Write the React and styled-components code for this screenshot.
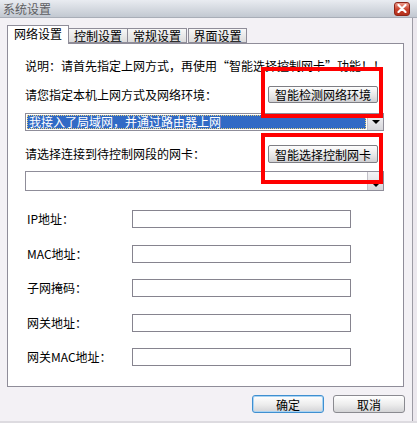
import React from 'react';
import styled, { createGlobalStyle } from 'styled-components';

const Global = createGlobalStyle`
  html, body { margin: 0; padding: 0; }
  body {
    width: 417px; height: 423px; overflow: hidden; background: #f3f1f5;
    font-family: "Noto Sans CJK SC", "Liberation Sans", sans-serif;
    font-size: 12px; color: #000;
  }
  * { box-sizing: border-box; }
`;

const Window = styled.div`
  width: 417px; height: 423px; display: flex; flex-direction: column;
  background: #f3f1f5; border-bottom: 2px solid #dddbe0;
`;

const TitleBar = styled.div`
  height: 18px; flex: none; display: flex; align-items: center; justify-content: space-between;
  padding: 0 7px 0 3px;
  background: linear-gradient(#e9ecf1, #c2c8d1);
  border-bottom: 1px solid #a8adb7;
`;

const Title = styled.span`
  color: #5e5e62; font-size: 12px; line-height: 14px;
`;

const CloseBtn = styled.div`
  width: 16px; height: 14px; border-radius: 3px; border: 1px solid #8d2417;
  background: linear-gradient(#ec9a8a, #c9402b 55%, #b3301c);
  display: flex; align-items: center; justify-content: center;
`;

const Body = styled.div`
  flex: 1; display: flex; min-height: 0;
`;

const Main = styled.div`
  width: 412px; flex: none; display: flex; flex-direction: column;
  padding: 7px 7px 0 7px;
`;

const Strip = styled.div`
  flex: 1; border-left: 1px solid #9d9ba4; background: #ece8ee;
`;

const TabRow = styled.div`
  height: 18px; display: flex; align-items: flex-end; position: relative; z-index: 1;
`;

const Tab = styled.div`
  width: ${p => p.$w}px; height: ${p => (p.$active ? 19 : 15)}px;
  margin-left: ${p => p.$ml || 0}px;
  margin-bottom: ${p => (p.$active ? -1 : 0)}px;
  display: flex; align-items: center; justify-content: center;
  border: 1px solid #8f8d99; border-bottom: ${p => (p.$active ? 'none' : '1px solid #8f8d99')};
  border-left: ${p => (p.$first || p.$active ? '1px solid #8f8d99' : 'none')};
  background: ${p => (p.$active ? '#ffffff' : 'linear-gradient(#f7f7f7, #dcdcdc)')};
  padding-bottom: ${p => (p.$active ? 3 : 0)}px;
  font-size: 12px; line-height: 13px;
`;

const Panel = styled.div`
  height: 344px; margin-right: 1px; background: #fff;
  border: 1px solid #8f8d99; position: relative;
  padding: 14px 19px 0 17px; display: flex; flex-direction: column;
`;

const Note = styled.div`
  height: 16px; line-height: 16px; white-space: nowrap;
`;

const Quote = styled.span`
  font-feature-settings: "fwid";
`;

const ActionRow = styled.div`
  margin-top: ${p => p.$mt}px; height: ${p => p.$h}px;
  display: flex; align-items: center; justify-content: space-between;
`;

const Label = styled.span`
  line-height: 16px; white-space: nowrap;
`;

const PushButton = styled.div`
  width: 110px; height: 100%; margin-right: 6px;
  border: 1px solid #7e7e84; border-radius: 2px;
  background: linear-gradient(#fdfdfd, #e6e6e6 60%, #cfcfd2);
  display: flex; align-items: center; justify-content: center;
  font-size: 12px; line-height: 13px;
`;

const Combo = styled.div`
  margin-top: ${p => p.$mt}px; height: ${p => p.$h}px;
  border: 1px solid #8f8d99; display: flex;
`;

const ComboValue = styled.div`
  flex: 1; padding: 1px; display: flex;
`;

const Selected = styled.div`
  flex: 1; background: #316ac5; color: #fff; outline: 1px dotted #e6cf7a; outline-offset: -1px;
  padding-left: 2px; line-height: 14px; font-size: 12px; white-space: nowrap;
`;

const DropBtn = styled.div`
  width: 16px; flex: none; border-left: 1px solid #c2c0c8;
  background: linear-gradient(#f4f4f6, #d6d6da);
  display: flex; align-items: ${p => (p.$bottom ? 'flex-end' : 'center')}; justify-content: center;
  padding-bottom: ${p => (p.$bottom ? 3 : 0)}px;
`;

const Arrow = styled.div`
  width: 0; height: 0; border-left: 4px solid transparent; border-right: 4px solid transparent;
  border-top: 4px solid #000;
`;

const Fields = styled.div`
  margin-top: 19px; display: grid; grid-template-columns: 105px 219px;
  grid-auto-rows: 18px; row-gap: 16.5px; padding-left: 2px;
`;

const FieldLabel = styled.div`
  line-height: 18px; white-space: nowrap; font-size: 12px;
`;

const TextBox = styled.div`
  border: 1px solid #86848f; background: #fff;
`;

const Mark = styled.div`
  position: absolute; left: 253px; top: ${p => p.$top}px; width: 122px; height: 51px;
  border: 4px solid #ff0000; pointer-events: none;
`;

const Footer = styled.div`
  display: flex; justify-content: flex-end; gap: 9px; padding-top: 8px;
`;

const DialogButton = styled.div`
  width: 72px; height: 18px; border-radius: 3px;
  border: 1px solid ${p => (p.$default ? '#3f8fd0' : '#8a8a90')};
  box-shadow: ${p => (p.$default ? 'inset 0 0 0 1px #a9d3f3' : 'none')};
  background: linear-gradient(#ffffff, #ececec 55%, #d3d3d6);
  display: flex; align-items: center; justify-content: center;
  font-size: 12px; line-height: 13px;
`;

const fields = ['IP地址：', 'MAC地址：', '子网掩码：', '网关地址：', '网关MAC地址：'];

export default function App() {
  return (
    <>
      <Global />
      <Window lang="zh-CN">
        <TitleBar>
          <Title>系统设置</Title>
          <CloseBtn>
            <svg width="10" height="9" viewBox="0 0 10 9">
              <path d="M1.5 1 L8.5 8 M8.5 1 L1.5 8" stroke="#fff" strokeWidth="2.2" strokeLinecap="round" />
            </svg>
          </CloseBtn>
        </TitleBar>
        <Body>
          <Main>
            <TabRow>
              <Tab $w={62} $active>网络设置</Tab>
              <Tab $w={59}>控制设置</Tab>
              <Tab $w={59}>常规设置</Tab>
              <Tab $w={59} $ml={1} $first>界面设置</Tab>
            </TabRow>
            <Panel>
              <Note>说明：请首先指定上网方式，再使用<Quote>“</Quote>智能选择控制网卡<Quote>”</Quote>功能！！</Note>
              <ActionRow $mt={12} $h={17}>
                <Label>请您指定本机上网方式及网络环境：</Label>
                <PushButton>智能检测网络环境</PushButton>
              </ActionRow>
              <Combo $mt={10} $h={18}>
                <ComboValue>
                  <Selected>我接入了局域网，并通过路由器上网</Selected>
                </ComboValue>
                <DropBtn><Arrow /></DropBtn>
              </Combo>
              <ActionRow $mt={14} $h={18}>
                <Label>请选择连接到待控制网段的网卡：</Label>
                <PushButton>智能选择控制网卡</PushButton>
              </ActionRow>
              <Combo $mt={8} $h={20}>
                <ComboValue />
                <DropBtn $bottom><Arrow /></DropBtn>
              </Combo>
              <Fields>
                {fields.map(f => (
                  <React.Fragment key={f}>
                    <FieldLabel>{f}</FieldLabel>
                    <TextBox />
                  </React.Fragment>
                ))}
              </Fields>
              <Mark $top={23} />
              <Mark $top={89} />
            </Panel>
            <Footer>
              <DialogButton $default>确定</DialogButton>
              <DialogButton>取消</DialogButton>
            </Footer>
          </Main>
          <Strip />
        </Body>
      </Window>
    </>
  );
}
